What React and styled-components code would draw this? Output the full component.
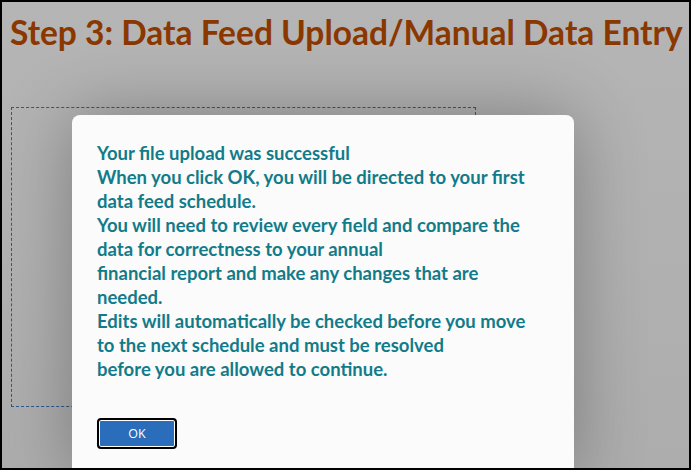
import React from "react";
import styled, { createGlobalStyle } from "styled-components";

const Global = createGlobalStyle`
  html, body { margin: 0; padding: 0; background: #b3b3b3; }
  * { box-sizing: border-box; }
`;

const Frame = styled.div`
  position: relative;
  width: 691px;
  height: 470px;
  border: 2px solid #000;
  overflow: hidden;
  background: linear-gradient(180deg, #b5b5b5 0%, #adadad 100%);
  display: flex;
  flex-direction: column;
`;

const Title = styled.h1`
  margin: 10px 0 0 8px;
  font-family: Lato, "Open Sans", sans-serif;
  font-weight: 700;
  font-size: 33.5px;
  line-height: 40px;
  color: #8a3700;
  white-space: nowrap;
`;

const UploadArea = styled.div`
  margin: 55px 0 0 9px;
  width: 465px;
  height: 300px;
  border: 1px dashed #2e5a8e;
`;

const Dialog = styled.div`
  position: absolute;
  left: 70px;
  top: 113px;
  width: 502px;
  bottom: -12px;
  background: #fbfbfb;
  border-radius: 8px;
  box-shadow: 0 0 70px rgba(0, 0, 0, 0.3);
  padding: 26px 25px 0 25px;
  display: flex;
  flex-direction: column;
  align-items: flex-start;
`;

const Message = styled.div`
  font-family: Lato, "Open Sans", sans-serif;
  font-weight: 700;
  font-size: 18.5px;
  line-height: 24px;
  color: #127b8a;
`;

const Line = styled.div`
  white-space: nowrap;
`;

const OkButton = styled.button`
  margin-top: 37px;
  width: 80px;
  height: 31px;
  border: 2px solid #000;
  border-radius: 4px;
  background: #2a6dbb;
  box-shadow: inset 0 0 0 1px #fff;
  color: #fff;
  font-family: "Open Sans", sans-serif;
  font-size: 12.5px;
  font-weight: 500;
  padding: 0;
`;

const lines = [
  "Your file upload was successful",
  "When you click OK, you will be directed to your first",
  "data feed schedule.",
  "You will need to review every field and compare the",
  "data for correctness to your annual",
  "financial report and make any changes that are",
  "needed.",
  "Edits will automatically be checked before you move",
  "to the next schedule and must be resolved",
  "before you are allowed to continue.",
];

export default function App() {
  return (
    <>
      <Global />
      <Frame>
        <Title>Step 3: Data Feed Upload/Manual Data Entry</Title>
        <UploadArea />
        <Dialog>
          <Message>
            {lines.map((l) => (
              <Line key={l}>{l}</Line>
            ))}
          </Message>
          <OkButton>OK</OkButton>
        </Dialog>
      </Frame>
    </>
  );
}
